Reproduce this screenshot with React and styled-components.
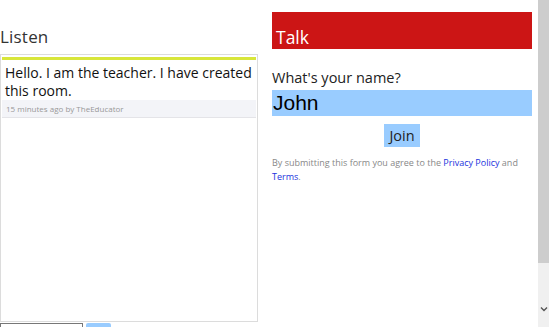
import React from "react";
import styled, { createGlobalStyle } from "styled-components";

const Global = createGlobalStyle`
  html, body { margin: 0; padding: 0; background: #fff; overflow: hidden; }
  body { font-family: "Open Sans", "DejaVu Sans", sans-serif; }
`;

const Viewport = styled.div`
  width: 549px;
  height: 327px;
  display: flex;
  overflow: hidden;
`;

const Page = styled.div`
  flex: 1;
  display: grid;
  grid-template-columns: 258px 260px;
  column-gap: 14px;
  align-items: start;
  overflow: hidden;
`;

const Column = styled.div`
  display: flex;
  flex-direction: column;
`;

const ListenTitle = styled.h2`
  margin: 27px 0 0 0;
  font-weight: normal;
  font-size: 17px;
  line-height: 20px;
  color: #333;
  letter-spacing: 0.2px;
`;

const Board = styled.div`
  margin-top: 7px;
  height: 268px;
  border: 1px solid #dcdcdc;
  padding: 2px 1px;
  box-sizing: border-box;
`;

const Message = styled.div`
  border-top: 3px solid #d8e63a;
  border-bottom: 1px solid #e4e4e8;
`;

const MessageText = styled.div`
  padding: 4px 3px 0 3px;
  font-size: 14px;
  line-height: 18px;
  color: #111;
`;

const Meta = styled.div`
  background: #f3f4f8;
  padding: 3px 3px 2px 4px;
  font-size: 8px;
  line-height: 12px;
  color: #999;
`;

const Composer = styled.div`
  display: flex;
  gap: 3px;
  margin-top: 1px;
`;

const ComposeInput = styled.div`
  width: 81px;
  height: 10px;
  border: 1px solid #777;
`;

const ComposeButton = styled.div`
  width: 25px;
  height: 10px;
  background: #99ccff;
  border-radius: 2px 2px 0 0;
`;

const TalkBar = styled.div`
  margin-top: 12px;
  height: 37px;
  background: #cc1515;
  color: #fff;
  font-size: 17.5px;
  line-height: 20px;
  padding: 15px 4px 0 4px;
  box-sizing: border-box;
`;

const Label = styled.label`
  margin-top: 20px;
  font-size: 14.5px;
  line-height: 18px;
  color: #222;
`;

const NameInput = styled.div`
  margin-top: 3px;
  height: 26px;
  background: #99ccff;
  font-family: "Liberation Sans", Arial, sans-serif;
  font-size: 21px;
  line-height: 26px;
  padding: 0 1px;
  color: #000;
`;

const ButtonRow = styled.div`
  display: flex;
  justify-content: center;
  margin-top: 8px;
`;

const JoinButton = styled.button`
  border: none;
  background: #99ccff;
  font-family: inherit;
  font-size: 14.5px;
  line-height: 23px;
  height: 23px;
  padding: 0 5px;
  color: #222;
`;

const Fine = styled.p`
  margin: 9px 0 0 0;
  font-size: 9px;
  line-height: 14px;
  color: #888;
`;

const Link = styled.a`
  color: #2233dd;
  text-decoration: none;
`;

const Scrollbar = styled.div`
  width: 11px;
  background: #f0f0f0;
  display: flex;
  flex-direction: column;
  align-items: center;
`;

const Thumb = styled.div`
  width: 11px;
  height: 263px;
  background: #cdcdcd;
`;

const Arrow = styled.svg`
  margin-top: 43px;
`;

export default function App() {
  return (
    <Viewport>
      <Global />
      <Page>
        <Column>
          <ListenTitle>Listen</ListenTitle>
          <Board>
            <Message>
              <MessageText>Hello. I am the teacher. I have created this room.</MessageText>
              <Meta>15 minutes ago by TheEducator</Meta>
            </Message>
          </Board>
          <Composer>
            <ComposeInput />
            <ComposeButton />
          </Composer>
        </Column>
        <Column>
          <TalkBar>Talk</TalkBar>
          <Label>What's your name?</Label>
          <NameInput>John</NameInput>
          <ButtonRow>
            <JoinButton>Join</JoinButton>
          </ButtonRow>
          <Fine>
            By submitting this form you agree to the <Link href="#">Privacy Policy</Link> and{" "}
            <Link href="#">Terms</Link>.
          </Fine>
        </Column>
      </Page>
      <Scrollbar>
        <Thumb />
        <Arrow width="8" height="6" viewBox="0 0 8 6">
          <path d="M1 1.5 L4 4.5 L7 1.5" fill="none" stroke="#555" strokeWidth="1.4" />
        </Arrow>
      </Scrollbar>
    </Viewport>
  );
}
